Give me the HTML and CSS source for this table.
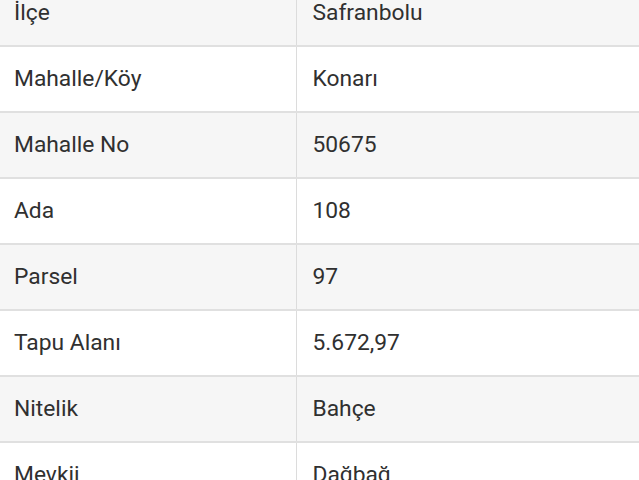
FILE: index.html
```html
<!DOCTYPE html>
<html lang="tr">
<head>
<meta charset="utf-8">
<link rel="stylesheet" href="styles.css">
</head>
<body>
<table class="info">
  <tbody>
    <tr class="alt"><td class="key">İlçe</td><td class="val">Safranbolu</td></tr>
    <tr><td class="key">Mahalle/Köy</td><td class="val">Konarı</td></tr>
    <tr class="alt"><td class="key">Mahalle No</td><td class="val">50675</td></tr>
    <tr><td class="key">Ada</td><td class="val">108</td></tr>
    <tr class="alt"><td class="key">Parsel</td><td class="val">97</td></tr>
    <tr><td class="key">Tapu Alanı</td><td class="val">5.672,97</td></tr>
    <tr class="alt"><td class="key">Nitelik</td><td class="val">Bahçe</td></tr>
    <tr><td class="key">Mevkii</td><td class="val">Dağbağ</td></tr>
  </tbody>
</table>
</body>
</html>
```
FILE: styles.css
```css
html, body {
  margin: 0;
  padding: 0;
  background: #ffffff;
}
body {
  overflow: hidden;
  font-family: Roboto, "Liberation Sans", sans-serif;
  color: #303030;
}
.info {
  width: 639px;
  border-collapse: collapse;
  margin-top: -21px;
  table-layout: fixed;
}
.info tr {
  background: #ffffff;
}
.info tr.alt {
  background: #f6f6f6;
}
.info td {
  height: 64px;
  padding: 0;
  border-top: 2px solid #e0e0e0;
  border-bottom: 2px solid #e0e0e0;
  font-size: 22.8px;
  line-height: 26px;
  vertical-align: middle;
}
.info td.key {
  width: 296px;
  padding-left: 14px;
  box-sizing: border-box;
  border-right: 1px solid #dcdcdc;
}
.info td.val {
  padding-left: 16px;
}
```
